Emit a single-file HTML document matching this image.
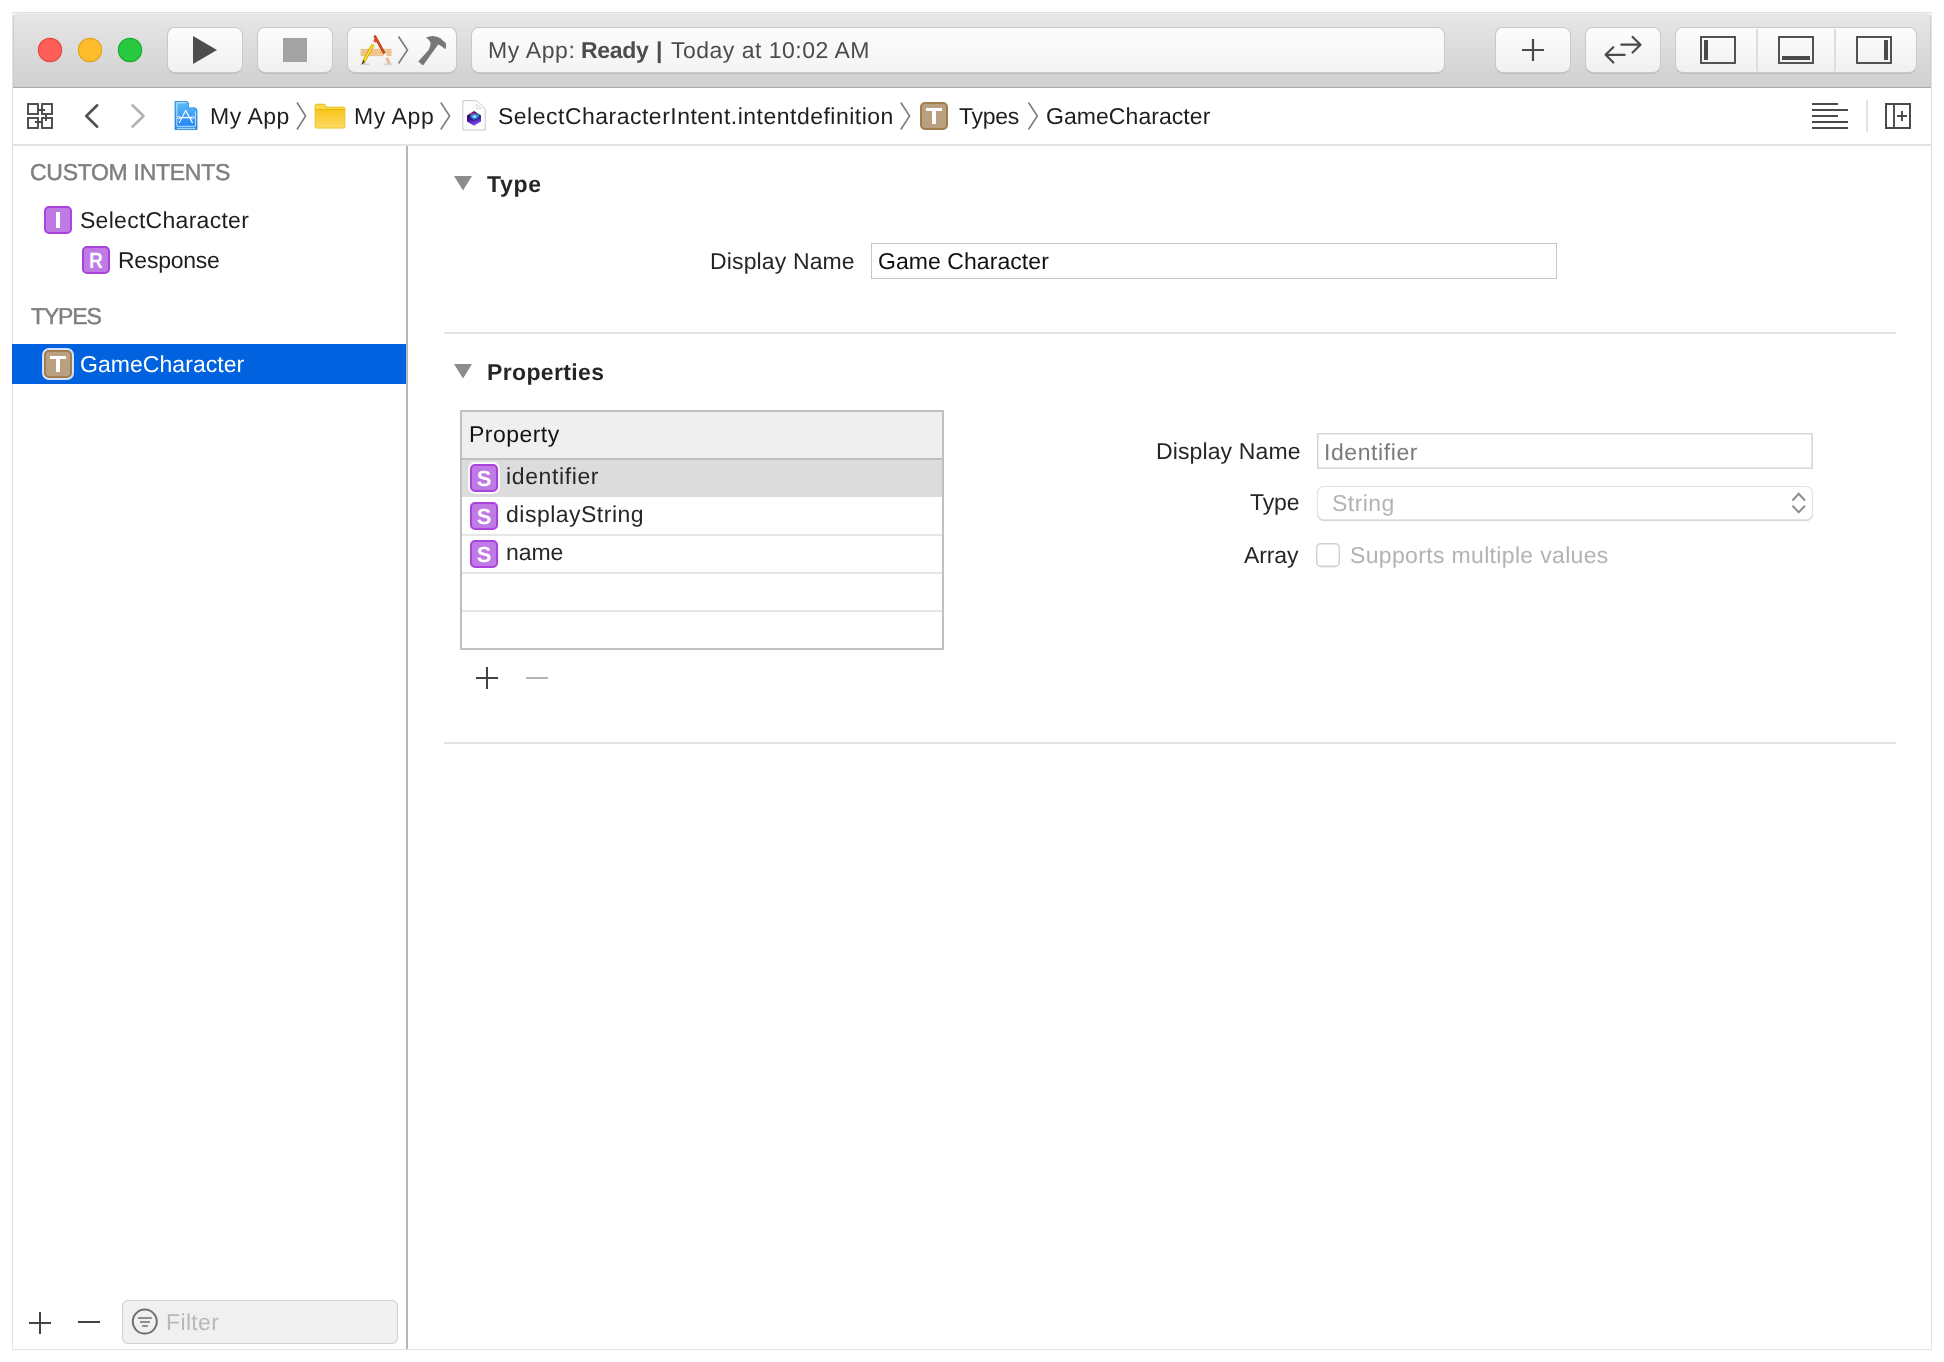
<!DOCTYPE html>
<html><head><meta charset="utf-8"><style>
html,body{margin:0;padding:0;}
body{width:1944px;height:1362px;position:relative;overflow:hidden;background:#fff;font-family:"Liberation Sans", sans-serif;}
.b{position:absolute;box-sizing:content-box;}
.t{position:absolute;white-space:pre;will-change:transform;text-rendering:geometricPrecision;font-family:"Liberation Sans", sans-serif;}
.ov{position:absolute;left:0;top:0;}
</style></head><body>
<div class="b" style="left:12px;top:12px;width:1920px;height:1338px;background:#fff;box-shadow:inset 0 0 0 1px #e2e2e2;"></div>
<div class="b" style="left:13px;top:13px;width:1918px;height:74px;background:linear-gradient(#e7e7e7,#e2e2e2 20%,#d0d0d0);border-radius:5px 5px 0 0;box-shadow:inset 0 1px 0 #f0f0f0, inset 1px 0 0 #cdcdcd, inset -1px 0 0 #cdcdcd;"></div>
<div class="b" style="left:13px;top:87px;width:1918px;height:1px;background:#a9a9a9;"></div>
<div class="b" style="left:168px;top:28px;width:74px;height:44px;border-radius:7px;background:linear-gradient(#fdfdfd,#f0f0f0);box-shadow:0 0 0 1px #c9c9c9, 0 1px 0 0.5px #a9a9a9;"></div>
<div class="b" style="left:258px;top:28px;width:74px;height:44px;border-radius:7px;background:linear-gradient(#fdfdfd,#f0f0f0);box-shadow:0 0 0 1px #c9c9c9, 0 1px 0 0.5px #a9a9a9;"></div>
<div class="b" style="left:348px;top:28px;width:108px;height:44px;border-radius:7px;background:linear-gradient(#fdfdfd,#f0f0f0);box-shadow:0 0 0 1px #c9c9c9, 0 1px 0 0.5px #a9a9a9;"></div>
<div class="b" style="left:1496px;top:28px;width:74px;height:44px;border-radius:7px;background:linear-gradient(#fdfdfd,#f0f0f0);box-shadow:0 0 0 1px #c9c9c9, 0 1px 0 0.5px #a9a9a9;"></div>
<div class="b" style="left:1586px;top:28px;width:74px;height:44px;border-radius:7px;background:linear-gradient(#fdfdfd,#f0f0f0);box-shadow:0 0 0 1px #c9c9c9, 0 1px 0 0.5px #a9a9a9;"></div>
<div class="b" style="left:1676px;top:28px;width:240px;height:44px;border-radius:7px;background:linear-gradient(#fdfdfd,#f0f0f0);box-shadow:0 0 0 1px #c9c9c9, 0 1px 0 0.5px #a9a9a9;"></div>
<div class="b" style="left:472px;top:28px;width:972px;height:44px;border-radius:7px;background:linear-gradient(#fcfcfc,#f4f4f4);box-shadow:0 0 0 1px #c9c9c9, 0 1px 0 0.5px #a9a9a9;"></div>
<div class="b" style="left:1756px;top:29px;width:2px;height:42px;background:#dddddd;"></div>
<div class="b" style="left:1834px;top:29px;width:2px;height:42px;background:#dddddd;"></div>
<div class="b" style="left:13px;top:144px;width:1918px;height:2px;background:#e3e3e3;"></div>
<div class="b" style="left:1866px;top:100px;width:2px;height:32px;background:#e2e2e2;"></div>
<div class="b" style="left:406px;top:146px;width:2px;height:1203px;background:#b6b6b6;"></div>
<div class="b" style="left:12px;top:344px;width:394px;height:40px;background:#0062df;"></div>
<div class="b" style="left:444px;top:332px;width:1452px;height:2px;background:#e3e3e3;"></div>
<div class="b" style="left:444px;top:742px;width:1452px;height:2px;background:#e3e3e3;"></div>
<div class="b" style="left:871px;top:243px;width:686px;height:36px;background:#fff;box-shadow:inset 0 0 0 1px #c6c6c6;"></div>
<div class="b" style="left:460px;top:410px;width:484px;height:240px;background:#fff;box-shadow:inset 0 0 0 2px #c0c0c0;"></div>
<div class="b" style="left:462px;top:412px;width:480px;height:46px;background:#efefef;"></div>
<div class="b" style="left:462px;top:458px;width:480px;height:2px;background:#bfbfbf;"></div>
<div class="b" style="left:462px;top:460px;width:480px;height:37px;background:#dcdcdc;"></div>
<div class="b" style="left:462px;top:534px;width:480px;height:2px;background:#e6e6e6;"></div>
<div class="b" style="left:462px;top:572px;width:480px;height:2px;background:#e6e6e6;"></div>
<div class="b" style="left:462px;top:610px;width:480px;height:2px;background:#e6e6e6;"></div>
<div class="b" style="left:1317px;top:433px;width:496px;height:36px;background:#fff;box-shadow:inset 0 0 0 1.5px #d6d6d6;"></div>
<div class="b" style="left:1318px;top:487px;width:494px;height:32px;background:#fff;border-radius:6px;box-shadow:0 0 0 1px #e4e4e4, 0 1px 1px 0.5px #d2d2d2;"></div>
<div class="b" style="left:1316px;top:543px;width:24px;height:24px;background:#fff;border-radius:5px;box-shadow:inset 0 0 0 1.5px #d2d2d2, 0 0.5px 0.5px #e0e0e0;"></div>
<div class="b" style="left:122px;top:1300px;width:276px;height:44px;background:#f0f0f0;border-radius:6px;box-shadow:inset 0 0 0 1px #cfcfcf;"></div>
<svg class="ov" width="1944" height="1362" viewBox="0 0 1944 1362">
<g>
 <circle cx="50" cy="50" r="11.6" fill="#ff5f57" stroke="#e2463f" stroke-width="1.2"/>
 <circle cx="90" cy="50" r="11.6" fill="#ffbd2e" stroke="#e1a116" stroke-width="1.2"/>
 <circle cx="130" cy="50" r="11.6" fill="#28c940" stroke="#12ac28" stroke-width="1.2"/>
</g>
<!-- play -->
<path d="M193 36 L217 50 L193 64 Z" fill="#4d4d4d"/>
<!-- stop -->
<rect x="283" y="38" width="24" height="24" fill="#a3a3a3"/>
<!-- scheme: app icon -->
<ellipse cx="365" cy="64.3" rx="5" ry="1" fill="#000" opacity="0.12"/>
<ellipse cx="388" cy="64.3" rx="5" ry="1" fill="#000" opacity="0.12"/>
<rect x="361" y="49.2" width="30" height="6.6" fill="#f2c995" stroke="#deae72" stroke-width="0.6"/>
<g fill="#c99a62"><circle cx="364" cy="52.3" r="0.55"/><circle cx="368" cy="52.3" r="0.55"/><circle cx="372" cy="52.3" r="0.55"/><circle cx="376" cy="52.3" r="0.55"/><circle cx="380" cy="52.3" r="0.55"/><circle cx="384" cy="52.3" r="0.55"/><circle cx="388" cy="52.3" r="0.55"/></g>
<line x1="363.2" y1="62.6" x2="373.2" y2="44.2" stroke="#c79600" stroke-width="3.2"/>
<line x1="363.4" y1="62.4" x2="373.2" y2="44.2" stroke="#ffe41e" stroke-width="1.8"/>
<line x1="362.4" y1="64" x2="364.2" y2="60.6" stroke="#333" stroke-width="1.4"/>
<line x1="373.2" y1="44.2" x2="374.6" y2="41.6" stroke="#f2f2f2" stroke-width="3"/>
<line x1="374.4" y1="42" x2="376" y2="39.2" stroke="#ff4a3a" stroke-width="3"/>
<line x1="374.5" y1="35.6" x2="384.4" y2="53.6" stroke="#a83008" stroke-width="2.6"/>
<line x1="374.7" y1="35.9" x2="384.4" y2="53.6" stroke="#e0501a" stroke-width="1.3"/>
<line x1="384.4" y1="53.6" x2="386.6" y2="57.8" stroke="#f6f6f6" stroke-width="2.6"/>
<line x1="386.6" y1="57.8" x2="389.6" y2="63.6" stroke="#e8b898" stroke-width="2.8"/>
<path d="M398.5 36.5 L407.5 50 L398.5 63.5" fill="none" stroke="#7a7a7a" stroke-width="1.6"/>
<!-- hammer -->
<path d="M426 37.5 Q434 33.8 441 38.6 L442.6 40.6 L445 42.2 Q446.2 43 446 44.5 L445.9 48.4 Q445.6 49 444.6 48.7 L442 46.5 L438.2 44.6 L423 65.6 L418.3 61.5 L428.4 50.2 Q431.4 44.6 430.2 41.8 Q428.8 39.2 426 37.5 Z" fill="#777"/>
<!-- plus toolbar -->
<path d="M1522 50 H1544 M1533 39 V61" stroke="#4a4a4a" stroke-width="2.2"/>
<!-- swap -->
<path d="M1621.3 44.7 H1640 M1632.6 37 L1640.5 44.7 L1632.6 52.5" fill="none" stroke="#4a4a4a" stroke-width="2.2" stroke-linecap="round" stroke-linejoin="round"/>
<path d="M1624.7 54.8 H1606 M1613.3 47.2 L1605.6 54.8 L1613.3 62.5" fill="none" stroke="#4a4a4a" stroke-width="2.2" stroke-linecap="round" stroke-linejoin="round"/>
<!-- layout icons -->
<rect x="1701" y="37" width="34" height="26" fill="none" stroke="#4a4a4a" stroke-width="1.9"/>
<rect x="1704" y="40" width="4" height="20" fill="#4a4a4a"/>
<rect x="1779" y="37" width="34" height="26" fill="none" stroke="#4a4a4a" stroke-width="1.9"/>
<rect x="1782" y="56" width="28" height="4" fill="#4a4a4a"/>
<rect x="1857" y="37" width="34" height="26" fill="none" stroke="#4a4a4a" stroke-width="1.9"/>
<rect x="1884" y="40" width="4" height="20" fill="#4a4a4a"/>
<!-- grid icon -->
<g fill="none" stroke="#4a4a4a" stroke-width="1.9">
 <rect x="28" y="104" width="10" height="10"/>
 <rect x="42" y="104" width="10" height="10"/>
 <rect x="28" y="118" width="10" height="10"/>
 <rect x="42" y="118" width="10" height="10"/>
 <path d="M38 110 H45 M46 114 V121 M35 122 H42"/>
</g>
<!-- nav chevrons -->
<path d="M97.2 105.3 L86.3 116 L97.2 126.7" fill="none" stroke="#505050" stroke-width="2.6" stroke-linecap="round" stroke-linejoin="round"/>
<path d="M132.5 105.3 L143.5 116 L132.5 126.7" fill="none" stroke="#b2b2b2" stroke-width="2.6" stroke-linecap="round" stroke-linejoin="round"/>
<!-- breadcrumb chevrons -->
<g fill="none" stroke="#7d7d7d" stroke-width="1.6">
 <path d="M297 102.5 L305.6 116 L297 129.5"/>
 <path d="M440.8 102.5 L449.6 116 L440.8 129.5"/>
 <path d="M900.8 102.5 L909.6 116 L900.8 129.5"/>
 <path d="M1028.5 102.5 L1037.3 116 L1028.5 129.5"/>
</g>
<!-- app doc icon -->
<defs>
 <linearGradient id="gb" x1="0" y1="0" x2="0" y2="1"><stop offset="0" stop-color="#5dbdf7"/><stop offset="1" stop-color="#1a7ff2"/></linearGradient>
 <linearGradient id="gf" x1="0" y1="0" x2="0" y2="1"><stop offset="0" stop-color="#fbd640"/><stop offset="1" stop-color="#f3c31a"/></linearGradient>
 <linearGradient id="gc" x1="0" y1="0" x2="1" y2="1"><stop offset="0" stop-color="#e0409a"/><stop offset="0.5" stop-color="#6a3ad8"/><stop offset="1" stop-color="#2a1a90"/></linearGradient>
</defs>
<path d="M175 101.5 H186 Q188.7 101.5 188.7 104 V107.7 H194 Q197 107.7 197 111 V129.6 H175 Z" fill="url(#gb)" stroke="#2a86d6" stroke-width="0.8"/>
<path d="M189.2 103.6 V107.3 H193.4 Z" fill="#ffffff"/>
<path d="M176.9 102.8 H186 M176.9 102.8 V126.3 H195.4 V111.5 M176.9 128.3 H195.4" fill="none" stroke="#d8eeff" stroke-width="0.9"/>
<g stroke="#fff" stroke-width="1.15" fill="none" stroke-linecap="round">
 <path d="M185.7 110.6 L179.4 122.6 M185.7 110.6 L192.4 122.6 M180 117.6 H191.6"/>
 <circle cx="178.9" cy="117.6" r="1.3" stroke-width="0.8"/>
 <circle cx="192.6" cy="117.6" r="1.3" stroke-width="0.8"/>
</g>
<!-- folder -->
<defs><linearGradient id="gf2" x1="0" y1="0" x2="0" y2="1"><stop offset="0" stop-color="#f9c41c"/><stop offset="1" stop-color="#fcdb62"/></linearGradient></defs>
<path d="M315.2 105.6 Q315.2 104.2 316.6 104.2 H324.4 L326.3 107.2 H343.4 Q344.8 107.2 344.8 108.6 V126.6 Q344.8 128 343.4 128 H316.6 Q315.2 128 315.2 126.6 Z" fill="#fbd84c" stroke="#e3b400" stroke-width="0.9"/>
<path d="M315.6 109.8 H344.4 V126.6 Q344.4 127.6 343.4 127.6 H316.6 Q315.6 127.6 315.6 126.6 Z" fill="url(#gf2)"/>
<path d="M315.6 109.5 H344.4" stroke="#e6b800" stroke-width="1"/>
<!-- intent doc icon -->
<path d="M462.8 100.6 H475.3 Q477 100.6 478.5 102 L483.8 107.4 Q485.3 108.9 485.3 110.5 V130 H462.8 Z" fill="#fdfdfd" stroke="#c8c8c8" stroke-width="1"/>
<path d="M476.6 104 V108.6 H481.4 Z" fill="#fdfdfd" stroke="#cfcfcf" stroke-width="0.8"/>
<defs>
 <linearGradient id="gcube" x1="0" y1="0" x2="0.3" y2="1"><stop offset="0" stop-color="#150838"/><stop offset="0.55" stop-color="#3a128a"/><stop offset="1" stop-color="#7a48f0"/></linearGradient>
 <radialGradient id="gsiri" cx="0.55" cy="0.5" r="0.6"><stop offset="0" stop-color="#ffffff"/><stop offset="0.22" stop-color="#50d8f0"/><stop offset="0.55" stop-color="#2a50c8"/><stop offset="0.85" stop-color="#281070"/><stop offset="1" stop-color="#140840"/></radialGradient>
</defs>
<path d="M474 111 L481 115.4 V121.6 L474 125.8 L467 121.6 V115.4 Z" fill="url(#gcube)"/>
<ellipse cx="474" cy="116.6" rx="5.4" ry="3.9" fill="url(#gsiri)"/>
<path d="M470.2 115.2 Q472 112.8 474.6 113.2" fill="none" stroke="#ff2a9a" stroke-width="1.3" opacity="0.9"/>
<path d="M476.2 113.6 Q478.4 114.4 478.8 116.4" fill="none" stroke="#30c890" stroke-width="1.1" opacity="0.9"/>
<!-- nav right icons -->
<g stroke="#4a4a4a" stroke-width="2">
 <path d="M1812 104 H1838 M1812 110 H1848 M1812 116 H1838 M1812 122 H1848 M1812 128 H1848"/>
</g>
<rect x="1886" y="104" width="24" height="24" fill="none" stroke="#4a4a4a" stroke-width="2"/>
<path d="M1894 104 V128 M1897 116 H1907 M1902 111 V121" stroke="#4a4a4a" stroke-width="1.9"/>
<!-- disclosure triangles -->
<path d="M454 176 H472 L463 190.5 Z" fill="#8c8c8c"/>
<path d="M454 364 H472 L463 378.5 Z" fill="#8c8c8c"/>
<!-- table plus/minus -->
<path d="M476 678 H498 M487 667 V689" stroke="#444" stroke-width="2"/>
<path d="M526 678 H548" stroke="#b4b4b4" stroke-width="2"/>
<!-- stepper -->
<path d="M1792.5 500.5 L1798.7 493.8 L1805 500.5 M1792.5 505.8 L1798.7 512.3 L1805 505.8" fill="none" stroke="#8e8e8e" stroke-width="2"/>
<!-- sidebar plus/minus -->
<path d="M29 1323 H51 M40 1312 V1334" stroke="#444" stroke-width="2"/>
<path d="M78 1322 H100" stroke="#444" stroke-width="2"/>
<!-- filter icon -->
<circle cx="144.8" cy="1321.6" r="12" fill="none" stroke="#6e6e6e" stroke-width="2"/>
<path d="M138 1318 H151.8 M140 1322 H150 M142.2 1326 H147.8" stroke="#6e6e6e" stroke-width="1.7"/>
</svg>
<div class="b" style="left:920px;top:102px;width:24px;height:24px;border:2px solid #a07e4e;background:#b8a080;border-radius:5px;"></div><div class="b" style="left:926px;top:108px;width:16px;height:3px;background:#fff;"></div><div class="b" style="left:932px;top:111px;width:4px;height:13px;background:#fff;"></div>
<div class="b" style="left:44px;top:206px;width:24px;height:24px;border:2px solid #a844dc;background:#c07ae6;border-radius:5px;"></div><div class="b" style="left:56px;top:212px;width:4px;height:16px;background:#fff;"></div>
<div class="b" style="left:82px;top:246px;width:24px;height:24px;border:2px solid #a844dc;background:#c07ae6;border-radius:5px;"></div><div class="t" style="left:82px;top:250px;width:28px;text-align:center;font-size:22px;line-height:22px;font-weight:700;color:#fff;transform:scaleX(0.88);">R</div>
<div class="b" style="left:42px;top:348px;width:32px;height:32px;border-radius:7px;background:#d2e2ff;"></div><div class="b" style="left:44px;top:350px;width:24px;height:24px;border:2px solid #a07e4e;background:#b8a080;border-radius:5px;"></div><div class="b" style="left:50px;top:356px;width:16px;height:3px;background:#fff;"></div><div class="b" style="left:56px;top:359px;width:4px;height:13px;background:#fff;"></div>
<div class="b" style="left:468px;top:462px;width:32px;height:32px;border-radius:7px;background:#fafafa;"></div><div class="b" style="left:470px;top:464px;width:24px;height:24px;border:2px solid #a844dc;background:#c07ae6;border-radius:5px;"></div><div class="t" style="left:470px;top:468px;width:28px;text-align:center;font-size:22px;line-height:22px;font-weight:700;color:#fff;">S</div>
<div class="b" style="left:470px;top:502px;width:24px;height:24px;border:2px solid #a844dc;background:#c07ae6;border-radius:5px;"></div><div class="t" style="left:470px;top:506px;width:28px;text-align:center;font-size:22px;line-height:22px;font-weight:700;color:#fff;">S</div>
<div class="b" style="left:470px;top:540px;width:24px;height:24px;border:2px solid #a844dc;background:#c07ae6;border-radius:5px;"></div><div class="t" style="left:470px;top:544px;width:28px;text-align:center;font-size:22px;line-height:22px;font-weight:700;color:#fff;">S</div>
<div class="t" style="left:487.80px;top:39.00px;font-size:23px;line-height:23px;font-weight:400;color:#4c4c4c;letter-spacing:0.633px;">My App:</div>
<div class="t" style="left:580.90px;top:39.00px;font-size:23px;line-height:23px;font-weight:700;color:#4c4c4c;letter-spacing:-0.300px;">Ready</div>
<div class="t" style="left:656.00px;top:39.00px;font-size:23px;line-height:23px;font-weight:700;color:#4c4c4c;letter-spacing:0.000px;">|</div>
<div class="t" style="left:671.30px;top:39.00px;font-size:23px;line-height:23px;font-weight:400;color:#4c4c4c;letter-spacing:0.494px;">Today at 10:02 AM</div>
<div class="t" style="left:209.80px;top:104.80px;font-size:23px;line-height:23px;font-weight:400;color:#1e1e1e;letter-spacing:0.540px;">My App</div>
<div class="t" style="left:353.50px;top:104.80px;font-size:23px;line-height:23px;font-weight:400;color:#1e1e1e;letter-spacing:0.600px;">My App</div>
<div class="t" style="left:498.10px;top:104.80px;font-size:23px;line-height:23px;font-weight:400;color:#1e1e1e;letter-spacing:0.492px;">SelectCharacterIntent.intentdefinition</div>
<div class="t" style="left:959.00px;top:104.80px;font-size:23px;line-height:23px;font-weight:400;color:#1e1e1e;letter-spacing:-0.250px;">Types</div>
<div class="t" style="left:1045.90px;top:104.80px;font-size:23px;line-height:23px;font-weight:400;color:#1e1e1e;letter-spacing:0.058px;">GameCharacter</div>
<div class="t" style="left:30.10px;top:161.30px;font-size:23px;line-height:23px;font-weight:400;color:#7f7f7f;letter-spacing:-0.292px;-webkit-text-stroke:0.45px #7f7f7f;">CUSTOM INTENTS</div>
<div class="t" style="left:80.10px;top:209.10px;font-size:23px;line-height:23px;font-weight:400;color:#1e1e1e;letter-spacing:0.279px;">SelectCharacter</div>
<div class="t" style="left:117.80px;top:248.60px;font-size:23px;line-height:23px;font-weight:400;color:#1e1e1e;letter-spacing:-0.257px;">Response</div>
<div class="t" style="left:31.10px;top:305.00px;font-size:23px;line-height:23px;font-weight:400;color:#7f7f7f;letter-spacing:-1.150px;-webkit-text-stroke:0.45px #7f7f7f;">TYPES</div>
<div class="t" style="left:80.10px;top:352.80px;font-size:23px;line-height:23px;font-weight:400;color:#ffffff;letter-spacing:0.050px;">GameCharacter</div>
<div class="t" style="left:165.50px;top:1310.90px;font-size:23px;line-height:23px;font-weight:400;color:#b9b9b9;letter-spacing:0.360px;">Filter</div>
<div class="t" style="left:487.10px;top:173.00px;font-size:23px;line-height:23px;font-weight:700;color:#262626;letter-spacing:0.700px;">Type</div>
<div class="t" style="left:709.50px;top:250.30px;font-size:23px;line-height:23px;font-weight:400;color:#262626;letter-spacing:0.136px;">Display Name</div>
<div class="t" style="left:877.70px;top:250.30px;font-size:23px;line-height:23px;font-weight:400;color:#111111;letter-spacing:0.062px;">Game Character</div>
<div class="t" style="left:486.60px;top:360.80px;font-size:23px;line-height:23px;font-weight:700;color:#262626;letter-spacing:0.367px;">Properties</div>
<div class="t" style="left:469.20px;top:423.00px;font-size:23px;line-height:23px;font-weight:400;color:#111111;letter-spacing:0.471px;">Property</div>
<div class="t" style="left:505.70px;top:464.70px;font-size:23px;line-height:23px;font-weight:400;color:#262626;letter-spacing:0.622px;">identifier</div>
<div class="t" style="left:505.70px;top:502.90px;font-size:23px;line-height:23px;font-weight:400;color:#262626;letter-spacing:0.492px;">displayString</div>
<div class="t" style="left:505.70px;top:540.80px;font-size:23px;line-height:23px;font-weight:400;color:#262626;letter-spacing:-0.067px;">name</div>
<div class="t" style="left:1155.60px;top:439.75px;font-size:23px;line-height:23px;font-weight:400;color:#262626;letter-spacing:0.118px;">Display Name</div>
<div class="t" style="left:1323.60px;top:441.00px;font-size:23px;line-height:23px;font-weight:400;color:#7a7a7a;letter-spacing:0.578px;">Identifier</div>
<div class="t" style="left:1250.30px;top:491.40px;font-size:23px;line-height:23px;font-weight:400;color:#262626;letter-spacing:-0.133px;">Type</div>
<div class="t" style="left:1331.90px;top:491.70px;font-size:23px;line-height:23px;font-weight:400;color:#b3b3b3;letter-spacing:0.460px;">String</div>
<div class="t" style="left:1244.40px;top:543.80px;font-size:23px;line-height:23px;font-weight:400;color:#262626;letter-spacing:-0.125px;">Array</div>
<div class="t" style="left:1350.10px;top:544.00px;font-size:23px;line-height:23px;font-weight:400;color:#b3b3b3;letter-spacing:0.339px;">Supports multiple values</div>
</body></html>
